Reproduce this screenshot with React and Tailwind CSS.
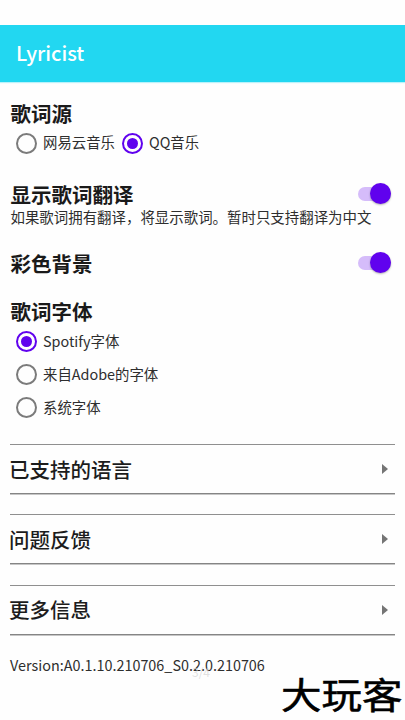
import React from 'react';
import clsx from 'clsx';

const Heading = ({ children }) => (
  <h2 className="text-[20.5px] leading-[26px] h-[27px] pl-[0.5px] font-bold text-[#1a1a1a] whitespace-nowrap">{children}</h2>
);

const Radio = ({ label, checked, className }) => (
  <label className={clsx('flex items-center text-[14.4px] text-[#2e2e2e] whitespace-nowrap', className)}>
    <span
      className={clsx(
        'w-[21px] h-[21px] rounded-full border-2 flex items-center justify-center shrink-0 mr-[6px]',
        checked ? 'border-[#6002ee]' : 'border-[#7b7b7b]'
      )}
    >
      {checked && <span className="w-[11px] h-[11px] rounded-full bg-[#6002ee]"></span>}
    </span>
    <span className="leading-5 pb-[2px]">{label}</span>
  </label>
);

const Toggle = () => (
  <span className="w-[33px] h-[14px] flex items-center justify-end rounded-full bg-[#d5bcfa] shrink-0 -mt-[2px]">
    <span className="w-[21px] h-[21px] rounded-full bg-[#6002ee] shadow-[0_1px_2px_rgba(0,0,0,0.3)] shrink-0"></span>
  </span>
);

const LinkRow = ({ label }) => (
  <div className="h-[50px] border-t-[1.5px] border-b-[1.5px] border-t-[#8f8f8f] border-b-[#858585] shadow-[0_1px_0_rgba(0,0,0,0.22)] flex items-center justify-between pr-[7px]">
    <span className="text-[20.5px] leading-[27px] font-medium text-[#1c1c1c] -ml-[1px]">{label}</span>
    <svg className="w-[6px] h-[10px]" viewBox="0 0 6 10">
      <path d="M0 0L6 5L0 10Z" fill="#757575" />
    </svg>
  </div>
);

const App = () => {
  return (
    <div className="relative w-[405px] h-[720px] overflow-hidden bg-[#fefefe] pt-[25px] font-['Noto_Sans_CJK_SC',sans-serif]">
      <header className="h-[57px] bg-[#22d7f1] flex items-center pl-4 pb-[1px] shadow-[0_1px_1px_rgba(34,215,241,0.3)]">
        <h1 className="text-[20px] leading-7 font-medium text-white">Lyricist</h1>
      </header>

      <main className="px-[10px] pt-[18px]">
        <section>
          <Heading>歌词源</Heading>
          <div className="flex h-8 pl-[6px]">
            <Radio label="网易云音乐" className="w-[106px]" />
            <Radio label="QQ音乐" checked />
          </div>
        </section>

        <section className="mt-[22px]">
          <div className="flex items-center justify-between h-[27px] pr-[4px]">
            <Heading>显示歌词翻译</Heading>
            <Toggle />
          </div>
          <p className="text-[14.45px] leading-[18px] h-5 pl-[0.5px] text-[#2e2e2e] whitespace-nowrap">
            如果歌词拥有翻译，将显示歌词。暂时只支持翻译为中文
          </p>
        </section>

        <section className="mt-[22px] flex items-center justify-between h-[27px] pr-[4px]">
          <Heading>彩色背景</Heading>
          <Toggle />
        </section>

        <section className="mt-[21px]">
          <Heading>歌词字体</Heading>
          <div className="flex flex-col pl-[6px]">
            <Radio label="Spotify字体" checked className="h-[33px]" />
            <Radio label="来自Adobe的字体" className="h-[33px]" />
            <Radio label="系统字体" className="h-[33px]" />
          </div>
        </section>

        <nav className="mt-5 flex flex-col gap-[20.3px]">
          <LinkRow label="已支持的语言" />
          <LinkRow label="问题反馈" />
          <LinkRow label="更多信息" />
        </nav>

        <p className="mt-5 text-[14.4px] leading-5 text-[#2e2e2e] whitespace-nowrap">
          Version:A0.1.10.210706_S0.2.0.210706
        </p>
      </main>

      {/* page indicator and site mark sit over the screen */}
      <span className="absolute left-[192px] top-[664px] text-[12px] leading-4 text-[#d4d4d4]/70">3/4</span>
      <span className="absolute left-[281px] top-[672px] text-[40.5px] leading-[44px] text-black whitespace-nowrap scale-y-90 [-webkit-text-stroke:0.6px_black]">
        大玩客
      </span>
    </div>
  );
};

export default App;
